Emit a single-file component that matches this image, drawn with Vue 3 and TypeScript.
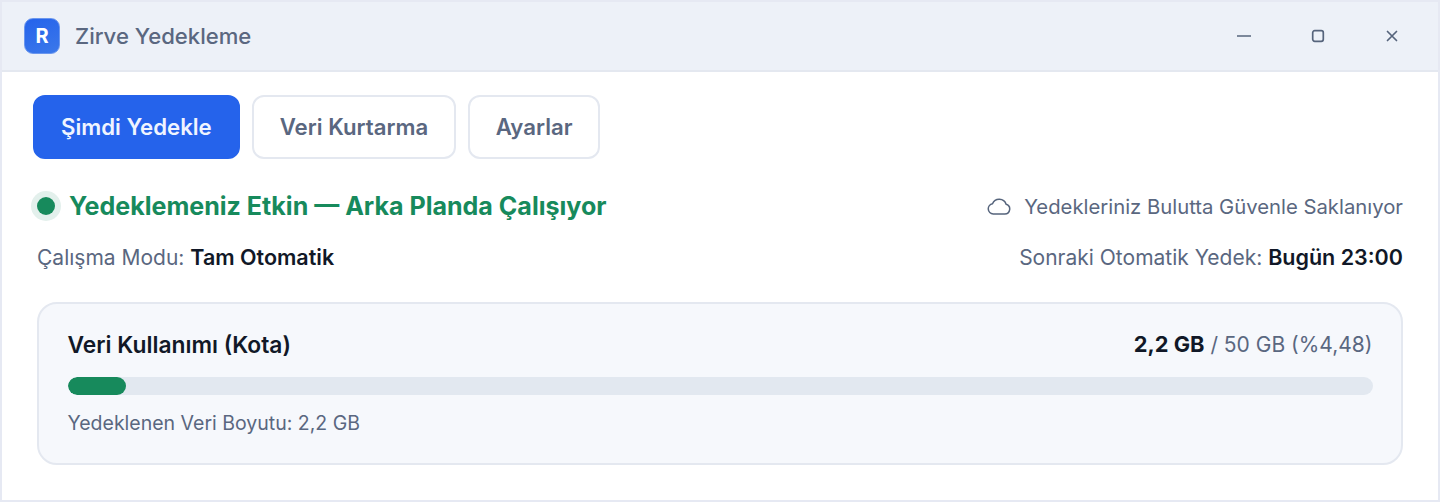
<script setup lang="ts">
const title = "Zirve Yedekleme";
const actions = [
  { label: "Şimdi Yedekle", primary: true },
  { label: "Veri Kurtarma", primary: false },
  { label: "Ayarlar", primary: false },
];
const usedPercent = 4.48;
</script>

<template>
  <div class="window">
    <header class="titlebar">
      <div class="brand">
        <span class="logo">R</span>
        <span class="title">{{ title }}</span>
      </div>
      <div class="controls">
        <svg class="ctl" viewBox="0 0 14 14" width="14" height="14"><path d="M0.500 7h13" /></svg>
        <svg class="ctl" viewBox="0 0 14 14" width="14" height="14"><rect x="1.700" y="1.700" width="10.600" height="10.600" rx="2" /></svg>
        <svg class="ctl" viewBox="0 0 14 14" width="14" height="14"><path d="M2.500 2.500l9 9M11.500 2.500l-9 9" /></svg>
      </div>
    </header>
    <main class="content">
      <div class="actions">
        <button v-for="a in actions" :key="a.label" class="btn" :class="{ primary: a.primary }">{{ a.label }}</button>
      </div>
      <div class="status-row">
        <div class="status">
          <span class="dot"></span>
          <span>Yedeklemeniz Etkin — Arka Planda Çalışıyor</span>
        </div>
        <div class="cloud">
          <svg viewBox="0 0 24 17" width="24" height="17"><path d="M6.200 16h11.600a5 5 0 0 0 1.300-9.800A7.300 7.300 0 0 0 5.500 5.700 5.200 5.200 0 0 0 6.200 16z" /></svg>
          <span>Yedekleriniz Bulutta Güvenle Saklanıyor</span>
        </div>
      </div>
      <div class="info-row">
        <div>Çalışma Modu: <strong>Tam Otomatik</strong></div>
        <div>Sonraki Otomatik Yedek: <strong>Bugün 23:00</strong></div>
      </div>
      <section class="card">
        <div class="card-head">
          <span class="card-title">Veri Kullanımı (Kota)</span>
          <span class="usage"><strong>2,2 GB</strong> / 50 GB (%4,48)</span>
        </div>
        <div class="track"><div class="fill" :style="{ width: usedPercent + '%' }"></div></div>
        <div class="foot">Yedeklenen Veri Boyutu: 2,2 GB</div>
      </section>
    </main>
  </div>
</template>

<style>
html, body { margin: 0; background: #fff; }
</style>

<style scoped>
.window {
  box-sizing: border-box;
  width: 1440px;
  height: 502px;
  border: 2px solid #e6e9f3;
  background: #fff;
  font-family: Inter, "Liberation Sans", sans-serif;
  color: #5a6780;
  overflow: hidden;
}
.titlebar {
  box-sizing: border-box;
  height: 70px;
  background: #edf1f8;
  border-bottom: 2px solid #e4e8f0;
  display: flex;
  align-items: center;
  justify-content: space-between;
  padding: 0 22px;
}
.brand { display: flex; align-items: center; gap: 15px; }
.logo {
  box-sizing: border-box;
  width: 36px;
  height: 36px;
  border-radius: 9px;
  background: linear-gradient(160deg, #2563eb, #3b78ea);
  border: 1px solid #6a96ee;
  color: #fff;
  font-weight: 700;
  font-size: 20px;
  display: flex;
  align-items: center;
  justify-content: center;
}
.title { font-size: 22.1px; font-weight: 500; color: #5a6780; }
.controls { display: flex; gap: 60px; padding-right: 17px; }
.ctl { fill: none; stroke: #56647c; stroke-width: 1.7; stroke-linecap: round; }
.content { padding: 23px 35px 0 31px; }
.actions { display: flex; gap: 12.5px; }
.btn {
  box-sizing: border-box;
  height: 64px;
  padding: 0 25.5px 1px;
  border-radius: 12px;
  border: 2px solid #e4e8f0;
  background: #fff;
  font: 600 22.2px Inter, "Liberation Sans", sans-serif;
  color: #5a6780;
}
.btn.primary { background: #2563eb; border-color: #2563eb; color: #eff4ff; padding: 0 26px 1px; }
.status-row {
  display: flex;
  justify-content: space-between;
  align-items: center;
  margin-top: 29px;
  height: 36px;
}
.status {
  display: flex;
  align-items: center;
  gap: 14px;
  padding-left: 4px;
  font-size: 25.05px;
  font-weight: 700;
  color: #178a5c;
}
.dot {
  width: 18px;
  height: 18px;
  border-radius: 50%;
  background: #178a5c;
  box-shadow: 0 0 0 6px #e3f0ec;
}
.cloud { display: flex; align-items: center; gap: 13px; font-size: 20.3px; color: #5a6780; }
.cloud svg { fill: none; stroke: #56647c; stroke-width: 1.5; }
.info-row {
  display: flex;
  justify-content: space-between;
  margin-top: 18px;
  padding-left: 4px;
  font-size: 21px;
  line-height: 30px;
}
.info-row strong { font-size: 21.5px; font-weight: 600; color: #111827; }
.card {
  box-sizing: border-box;
  margin: 29px 0 0 4px;
  height: 163px;
  border: 2px solid #e4e8f0;
  border-radius: 20px;
  background: #f6f8fc;
  padding: 25px 28.5px 0;
}
.card-head { display: flex; justify-content: space-between; align-items: center; font-size: 21px; height: 30px; }
.card-title { font-size: 22.8px; font-weight: 600; color: #111827; }
.usage strong { font-size: 21.8px; font-weight: 700; color: #111827; }
.track { height: 18px; margin-top: 18px; border-radius: 9px; background: #e2e8f0; overflow: hidden; }
.fill { height: 100%; border-radius: 9px; background: #178a5c; }
.foot { margin-top: 14px; font-size: 19.5px; line-height: 28px; }
</style>
